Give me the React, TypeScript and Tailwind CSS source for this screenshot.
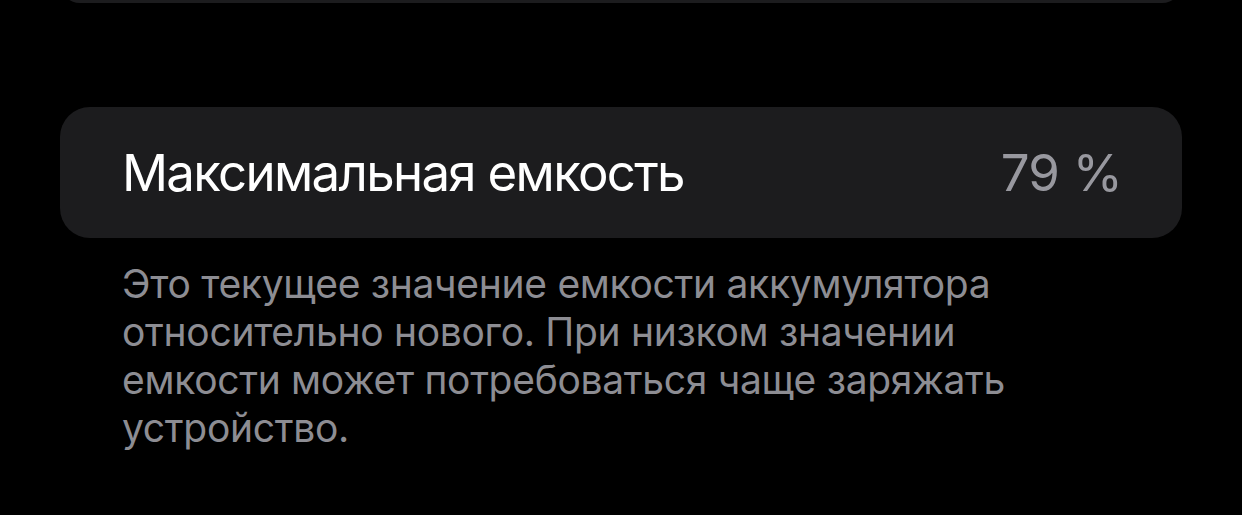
export default function App() {
  return (
    <div
      className="h-[515px] w-full overflow-hidden bg-black px-[60px]"
      style={{ fontFamily: 'Inter, "Noto Sans", sans-serif' }}
    >
      {/* tail of the previous group */}
      <div className="-mt-[37px] h-[40px] rounded-[30px] bg-[#1c1c1e]" />

      {/* capacity row */}
      <div className="mt-[104px] flex h-[131px] items-center justify-between rounded-[30px] bg-[#1c1c1e] pl-[62px] pr-[60px]">
        <span className="text-[51px] leading-none tracking-[-1.7px] text-white">Максимальная емкость</span>
        <span className="text-[51px] leading-none tracking-[-0.8px] text-[#98989f]">79 %</span>
      </div>

      {/* footnote */}
      <p className="mt-[22px] w-[1024px] px-[62px] text-[39px] leading-[48px] tracking-[-0.3px] text-[#8d8d93]">
        Это текущее значение емкости аккумулятора относительно нового. При низком значении
        емкости может потребоваться чаще заряжать устройство.
      </p>
    </div>
  );
}
